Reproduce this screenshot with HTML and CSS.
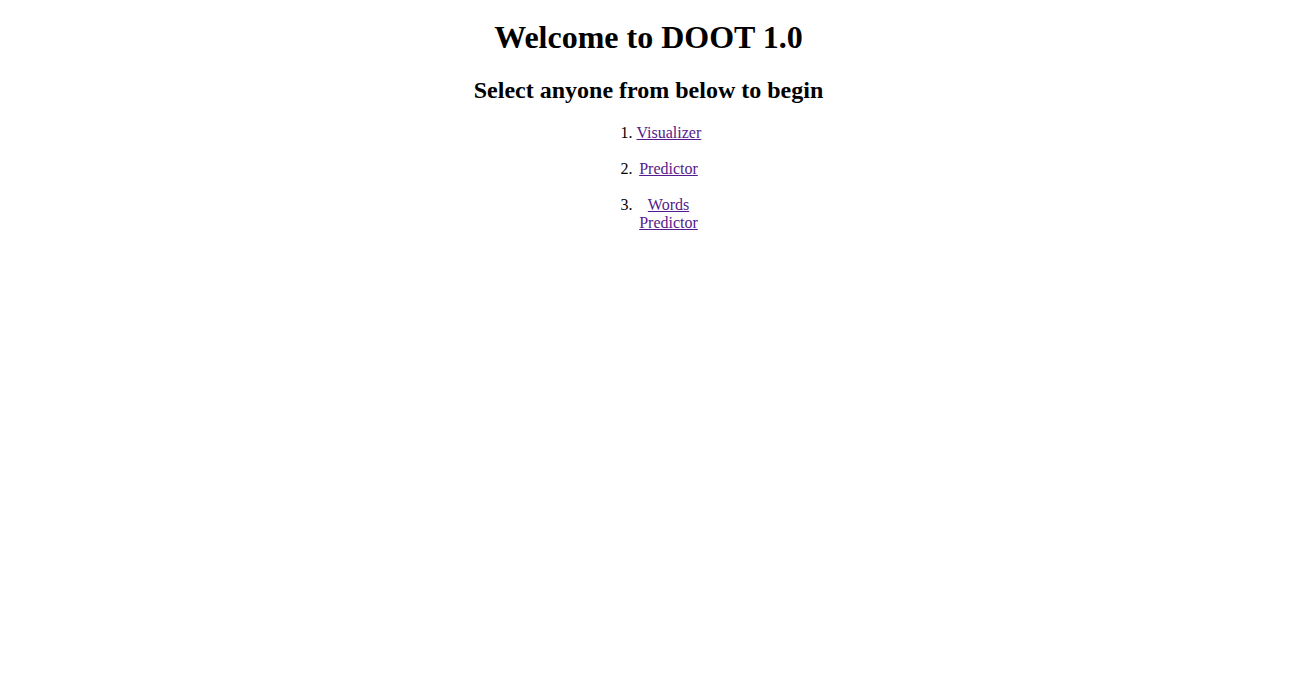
FILE: index.html
```html
<!DOCTYPE html>
<html>
<head>
<meta charset="utf-8">
<title>DOOT 1.0</title>
<link rel="stylesheet" href="styles.css">
</head>
<body>
<h1 class="title">Welcome to DOOT 1.0</h1>
<h2 class="subtitle">Select anyone from below to begin</h2>
<ol class="menu">
  <li class="menu-item"><a href="#">Visualizer</a></li>
  <li class="menu-item"><a href="#">Predictor</a></li>
  <li class="menu-item"><a href="#">Words Predictor</a></li>
</ol>
</body>
</html>
```
FILE: styles.css
```css
body {
  margin: 8px 9px 8px 8px;
  font-family: "Liberation Serif", "Times New Roman", serif;
  background: #ffffff;
  color: #000000;
}
.title,
.subtitle {
  text-align: center;
}
.title {
  margin-top: 10.5px;
}
.menu {
  width: 64px;
  margin: 0 auto;
  padding-left: 40px;
  text-align: center;
}
.menu-item {
  margin-bottom: 18px;
}
.menu-item a {
  color: #551a8b;
}
```
